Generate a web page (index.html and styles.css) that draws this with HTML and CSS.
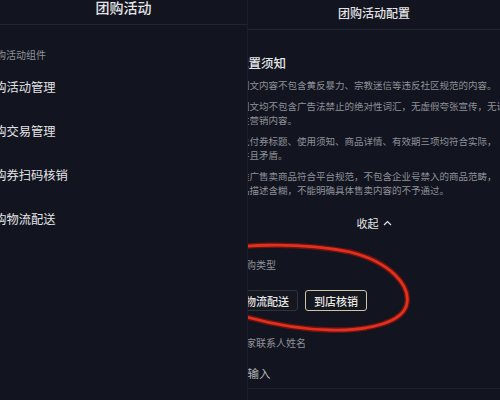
FILE: index.html
```html
<!DOCTYPE html>
<html lang="zh-CN">
<head>
    <meta charset="UTF-8">
    <meta name="viewport" content="width=device-width, initial-scale=1.0">
    <title>团购活动</title>
    <link rel="stylesheet" href="styles.css">
</head>
<body>
    <div class="screens">
        <!-- Left screen: activity menu -->
        <section class="panel panel-left">
            <div class="bar">
                <h1 class="bar-title">团购活动</h1>
            </div>
            <div class="menu">
                <p class="menu-label">团购活动组件</p>
                <ul class="menu-list">
                    <li>团购活动管理</li>
                    <li>团购交易管理</li>
                    <li>团购券扫码核销</li>
                    <li>团购物流配送</li>
                </ul>
            </div>
        </section>

        <!-- Right screen: activity config -->
        <section class="panel panel-right">
            <div class="bar bar-right">
                <h1 class="bar-title small">团购活动配置</h1>
            </div>
            <div class="form">
                <h2 class="notice-title">配置须知</h2>
                <ol class="rules">
                    <li>
                        <span class="num">1.</span>
                        <div>
                            <span class="line">图文内容不包含黄反暴力、宗教迷信等违反社区规范的内容。</span>
                        </div>
                    </li>
                    <li>
                        <span class="num">2.</span>
                        <div>
                            <span class="line">图文均不包含广告法禁止的绝对性词汇，无虚假夸张宣传，无诱导</span>
                            <span class="line">性营销内容。</span>
                        </div>
                    </li>
                    <li>
                        <span class="num">3.</span>
                        <div>
                            <span class="line">兑付券标题、使用须知、商品详情、有效期三项均符合实际，</span>
                            <span class="line">并且矛盾。</span>
                        </div>
                    </li>
                    <li>
                        <span class="num">4.</span>
                        <div>
                            <span class="line">推广售卖商品符合平台规范，不包含企业号禁入的商品范畴，</span>
                            <span class="line">品描述含糊，不能明确具体售卖内容的不予通过。</span>
                        </div>
                    </li>
                </ol>
                <div class="collapse-row">
                    <button class="collapse">
                        收起
                        <svg width="9" height="6" viewBox="0 0 9 6"><polyline points="1,5 4.5,1.5 8,5" fill="none" stroke="#e4e4e7" stroke-width="1.2"/></svg>
                    </button>
                </div>

                <div class="field">
                    <p class="field-label">团购类型</p>
                    <div class="options">
                        <button class="option">物流配送</button>
                        <button class="option active">到店核销</button>
                    </div>
                </div>

                <div class="field field-contact">
                    <p class="field-label">商家联系人姓名</p>
                    <input class="text-input" type="text" placeholder="请输入">
                </div>
            </div>

            <!-- hand drawn marker loop -->
            <svg class="marker" width="252" height="400" viewBox="0 0 252 400">
                <path d="M -48,255 C -18,243 52,242 102,252 C 142,262 162,285 159,303 C 156,322 122,331 82,330 C 42,329 7,320 -18,312 C -55,300 -58,265 -48,255 Z" fill="none" stroke="#6e120e" stroke-width="5.5"/>
                <path d="M -48,255 C -18,243 52,242 102,252 C 142,262 162,285 159,303 C 156,322 122,331 82,330 C 42,329 7,320 -18,312 C -55,300 -58,265 -48,255 Z" fill="none" stroke="#e0301f" stroke-width="2.8"/>
            </svg>
        </section>
    </div>
</body>
</html>
```

FILE: styles.css
```css
* {
    margin: 0;
    padding: 0;
    box-sizing: border-box;
}
:root {
    --bg: #12151f;
    --line: #212533;
    --text: #e4e4e7;
    --muted: #8e9098;
    --gold: #cfc4a6;
}
body {
    font-family: "Noto Sans CJK SC", "Noto Sans", sans-serif;
    background: var(--bg);
    color: var(--text);
    width: 500px;
    height: 400px;
    overflow: hidden;
}
.screens {
    display: flex;
    height: 400px;
}
.panel {
    height: 100%;
    overflow: hidden;
}
.panel-left {
    width: 248px;
    border-right: 1px solid #1a1e2a;
}
.panel-right {
    flex: 1;
    position: relative;
}
.bar {
    height: 25px;
    border-bottom: 1px solid var(--line);
    text-align: center;
}
.bar-title {
    font-size: 14px;
    line-height: 14px;
    font-weight: 500;
}
.bar-right {
    height: 30px;
    padding-top: 6px;
}
.bar-title.small {
    font-size: 12px;
}
/* Left menu */
.menu {
    margin-left: -18px;
}
.menu-label {
    margin: 23px 0 3px 4px;
    font-size: 10px;
    line-height: 14px;
    color: var(--muted);
}
.menu-list {
    list-style: none;
}
.menu-list li {
    font-size: 12.25px;
    line-height: 44px;
}
/* Right config form */
.form {
    margin-left: -12px;
}
.notice-title {
    margin-top: 26px;
    font-size: 12.5px;
    line-height: 14px;
    font-weight: 500;
}
.rules {
    list-style: none;
    margin: 8px 0 0 -8px;
}
.rules li {
    display: grid;
    grid-template-columns: 12px auto;
    font-size: 9.5px;
    line-height: 14px;
    color: var(--muted);
}
.rules li + li {
    margin-top: 7px;
}
.rules .line {
    display: block;
    white-space: nowrap;
}
.collapse-row {
    display: flex;
    justify-content: center;
    margin: 18px 0 0 12px;
}
.collapse {
    display: flex;
    align-items: center;
    gap: 4px;
    height: 16px;
    background: none;
    border: none;
    color: var(--text);
    font-family: inherit;
    font-size: 11px;
}
.field {
    margin-top: 27px;
}
.field-label {
    font-size: 10px;
    line-height: 14px;
    color: var(--muted);
}
.options {
    display: flex;
    gap: 7px;
    margin-top: 18px;
}
.option {
    width: 62px;
    height: 21px;
    display: flex;
    justify-content: center;
    align-items: center;
    background: #141720;
    border: 1px solid #2e323d;
    border-radius: 3px;
    color: var(--text);
    font-family: inherit;
    font-size: 11px;
    font-weight: 500;
}
.option.active {
    border: 1.5px solid var(--gold);
    color: #ebe8e0;
}
.field-contact {
    margin-top: 25px;
}
.text-input {
    display: block;
    width: 264px;
    height: 39px;
    margin-top: 0;
    padding: 15px 0 8px;
    background: transparent;
    border: none;
    border-bottom: 1px solid #1c202c;
    color: var(--text);
    font-family: inherit;
    font-size: 11.5px;
    outline: none;
}
.text-input::placeholder {
    color: #b3b4ba;
}
.marker {
    position: absolute;
    top: 0;
    left: 0;
    pointer-events: none;
}
```
